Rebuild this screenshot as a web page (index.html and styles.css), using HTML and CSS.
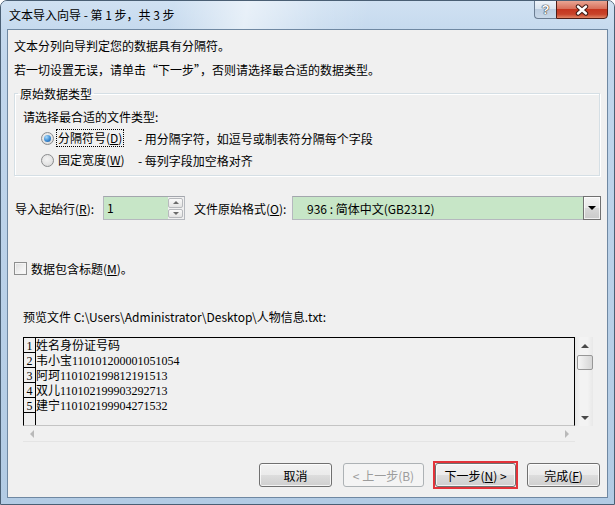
FILE: index.html
```html
<!DOCTYPE html>
<html lang="zh-CN">
<head>
<meta charset="utf-8">
<title>文本导入向导</title>
<link rel="stylesheet" href="styles.css">
</head>
<body>
<div class="window">
  <div class="titlebar">
    <span class="title">文本导入向导 - 第 1 步，共 3 步</span>
    <div class="caption">
      <div class="cap-help">?</div>
      <div class="cap-close">
        <svg width="16" height="12" viewBox="0 0 16 12">
          <path d="M4 2.5 L12 9.5 M12 2.5 L4 9.5" stroke="#3f1c16" stroke-width="4.4" stroke-linecap="round"/>
          <path d="M4 2.5 L12 9.5 M12 2.5 L4 9.5" stroke="#ffffff" stroke-width="2.4" stroke-linecap="round"/>
        </svg>
      </div>
    </div>
  </div>
  <div class="client">
    <p class="line">文本分列向导判定您的数据具有分隔符。</p>
    <p class="line">若一切设置无误，请单击“下一步”，否则请选择最合适的数据类型。</p>
    <fieldset class="group">
      <legend>原始数据类型</legend>
      <div class="g-row">请选择最合适的文件类型:</div>
      <div class="g-row">
        <span class="radio checked"></span>
        <span class="rlabel focus">分隔符号(<u>D</u>)</span>
        <span class="desc">- 用分隔字符，如逗号或制表符分隔每个字段</span>
      </div>
      <div class="g-row">
        <span class="radio"></span>
        <span class="rlabel">固定宽度(<u>W</u>)</span>
        <span class="desc">- 每列字段加空格对齐</span>
      </div>
    </fieldset>

    <div class="import-row">
      <span class="lbl-start">导入起始行(<u>R</u>):</span>
      <div class="spin">
        <span class="spin-field">1</span>
        <span class="spin-btns">
          <span class="spin-btn"><span class="tri-up small"></span></span>
          <span class="spin-btn"><span class="tri-down small"></span></span>
        </span>
      </div>
      <span class="lbl-origin">文件原始格式(<u>O</u>):</span>
      <div class="combo">
        <span class="combo-text">936 : 简体中文(GB2312)</span>
        <span class="combo-btn"><span class="tri-down"></span></span>
      </div>
    </div>

    <div class="check-row">
      <span class="checkbox"></span>
      <span>数据包含标题(<u>M</u>)。</span>
    </div>

    <div class="preview-label">预览文件 C:\Users\Administrator\Desktop\人物信息.txt:</div>

    <div class="preview">
      <div class="pv-main">
        <div class="pv-text">
          <div class="pv-nums">
            <div class="pv-num">1</div>
            <div class="pv-num">2</div>
            <div class="pv-num">3</div>
            <div class="pv-num">4</div>
            <div class="pv-num">5</div>
          </div>
          <div class="pv-lines">
            <div class="pv-line">姓名身份证号码</div>
            <div class="pv-line">韦小宝110101200001051054</div>
            <div class="pv-line">阿珂110102199812191513</div>
            <div class="pv-line">双儿110102199903292713</div>
            <div class="pv-line">建宁110102199904271532</div>
          </div>
        </div>
        <div class="vscroll">
          <span class="sb-btn"><span class="tri-up dark"></span></span>
          <span class="thumb"></span>
          <span class="sb-fill"></span>
          <span class="sb-btn"><span class="tri-down dark"></span></span>
        </div>
      </div>
      <div class="hscroll">
        <span class="sb-hbtn"><span class="tri-left"></span></span>
        <span class="sb-fill"></span>
        <span class="sb-hbtn"><span class="tri-right"></span></span>
      </div>
    </div>

    <div class="buttons">
      <span class="btn">取消</span>
      <span class="btn wide disabled">&lt; 上一步(B)</span>
      <span class="mark"><span class="btn wide">下一步(<u>N</u>) &gt;</span></span>
      <span class="btn">完成(<u>F</u>)</span>
    </div>
  </div>
</div>
</body>
</html>
```

FILE: styles.css
```css
* { box-sizing: border-box; }
html, body { margin: 0; padding: 0; background: #ffffff; }
body {
  font-family: "Noto Sans CJK SC", "Microsoft YaHei", sans-serif;
  font-size: 12px;
  color: #000;
}
u { text-decoration: underline; text-underline-offset: 1px; }

.window {
  width: 615px;
  height: 505px;
  border: 1px solid #4a5f74;
  border-radius: 7px 7px 0 0;
  padding: 0 6px 6px;
  background: linear-gradient(to bottom, #c9dcef 0, #c1d6ec 60px, #b2cbe4 100%);
  display: flex;
  flex-direction: column;
  overflow: hidden;
}

.titlebar {
  height: 28px;
  flex: none;
  display: flex;
  justify-content: space-between;
  align-items: flex-start;
  padding-left: 2px;
  margin: 0 -6px;
  padding-right: 6px;
  padding-left: 8px;
  background:
    linear-gradient(100deg, rgba(255,255,255,0) 28%, rgba(255,255,255,0.55) 40%, rgba(255,255,255,0.15) 52%, rgba(255,255,255,0) 60%),
    linear-gradient(to bottom, #d0e1f2, #c6daee);
}
.title { line-height: 28px; white-space: nowrap; }

.caption { display: flex; margin-top: -1px; }
.cap-help {
  width: 22px;
  height: 19px;
  border: 1px solid #6b7d92;
  border-right: none;
  border-radius: 0 0 0 4px;
  background: linear-gradient(to bottom, #eef3f9 0%, #d9e4ef 45%, #bccde0 50%, #c9d8e8 100%);
  color: #fff;
  font-family: "Liberation Sans", sans-serif;
  font-weight: bold;
  font-size: 13px;
  line-height: 17px;
  text-align: center;
  text-shadow: 0 0 1px #333, 0 0 1px #333, 0 0 1px #333;
}
.cap-close {
  width: 52px;
  height: 19px;
  border: 1px solid #4d1c15;
  border-radius: 0 0 4px 0;
  background: linear-gradient(to bottom, #e9a593 0%, #d8705b 45%, #c5361f 50%, #c8432a 78%, #e08565 100%);
  display: flex;
  align-items: center;
  justify-content: center;
}
.cap-close svg { display: block; }

.client {
  height: 469px;
  flex: none;
  border: 1px solid #6f88a2;
  background: #f0f0f0;
  display: flex;
  flex-direction: column;
  padding-top: 4px;
}

.line {
  margin: 0;
  height: 24px;
  line-height: 24px;
  padding-left: 6px;
  white-space: nowrap;
}

.group {
  margin: 4px 7px 0 6px;
  padding: 0 0 4px 0;
  border: 1px solid #d5dfe5;
  box-shadow: inset 1px 1px 0 #fff, 1px 1px 0 #fff;
  min-width: 0;
}
.group legend {
  margin-left: 3px;
  padding: 0 2px;
  line-height: 15px;
  height: 15px;
}
.g-row {
  height: 22px;
  display: flex;
  align-items: center;
  padding-left: 8px;
  white-space: nowrap;
}
.g-row:first-of-type { margin-top: 4px; }

.radio {
  width: 13px;
  height: 13px;
  border-radius: 50%;
  border: 1px solid #8a8c8e;
  background: radial-gradient(circle at 45% 40%, #f4f4f4 0%, #e4e4e4 55%, #cfcfcf 100%);
  margin-left: 18px;
  flex: none;
  position: relative;
}
.radio.checked::after {
  content: "";
  position: absolute;
  left: 2px;
  top: 2px;
  width: 7px;
  height: 7px;
  border-radius: 50%;
  background: radial-gradient(circle at 35% 30%, #a9dbfb 0%, #3b8ad2 55%, #1d5595 100%);
}
.rlabel {
  width: 68px;
  height: 18px;
  line-height: 16px;
  margin-left: 2px;
  padding-left: 1px;
  border: 1px dotted transparent;
}
.rlabel.focus { border-color: #000; }
.desc { margin-left: 14px; }

.import-row {
  margin-top: 20px;
  height: 24px;
  display: flex;
  align-items: center;
  padding-left: 7px;
  margin-right: 6px;
  white-space: nowrap;
}
.lbl-start { width: 88px; flex: none; }
.lbl-origin { width: 98px; flex: none; margin-left: 9px; }

.spin {
  width: 82px;
  height: 24px;
  flex: none;
  border: 1px solid #b5b8be;
  border-top-color: #a3a6ad;
  background: #c7e6c7;
  display: flex;
}
.spin-field { flex: 1; padding-left: 3px; line-height: 21px; }
.spin-btns {
  width: 16px;
  display: flex;
  flex-direction: column;
  gap: 1px;
  padding: 1px 1px 1px 0;
  background: #f0f0f0;
}
.spin-btn {
  flex: 1;
  border: 1px solid #b7b9bd;
  border-radius: 2px;
  background: linear-gradient(to bottom, #fafafa, #e3e3e3);
  display: flex;
  align-items: center;
  justify-content: center;
}

.combo {
  flex: 1;
  height: 24px;
  border: 1px solid #b5b8be;
  border-top-color: #a3a6ad;
  background: #c7e6c7;
  display: flex;
  align-items: center;
}
.combo-text { flex: 1; padding-left: 14px; }
.combo-btn {
  width: 18px;
  height: 24px;
  margin: -1px -1px -1px 0;
  border: 1px solid #707070;
  background: linear-gradient(to bottom, #f3f3f3 0%, #e8e8e8 50%, #d8d8d8 51%, #cacaca 100%);
  box-shadow: inset 0 0 0 1px rgba(255,255,255,0.7);
  display: flex;
  align-items: center;
  justify-content: center;
}

.tri-up, .tri-down, .tri-left, .tri-right { width: 0; height: 0; display: block; }
.tri-down { border-left: 4px solid transparent; border-right: 4px solid transparent; border-top: 4px solid #000; }
.tri-up.small { border-left: 3px solid transparent; border-right: 3px solid transparent; border-bottom: 3px solid #6a6a6a; }
.tri-down.small { border-left: 3px solid transparent; border-right: 3px solid transparent; border-top: 3px solid #6a6a6a; }
.tri-up.dark { border-left: 4px solid transparent; border-right: 4px solid transparent; border-bottom: 4px solid #4a4a4a; }
.tri-down.dark { border-left: 4px solid transparent; border-right: 4px solid transparent; border-top: 4px solid #4a4a4a; }
.tri-left { border-top: 4px solid transparent; border-bottom: 4px solid transparent; border-right: 4px solid #b9b9b9; }
.tri-right { border-top: 4px solid transparent; border-bottom: 4px solid transparent; border-left: 4px solid #b9b9b9; }

.check-row {
  margin-top: 37px;
  height: 22px;
  display: flex;
  align-items: center;
  padding-left: 6px;
}
.checkbox {
  width: 13px;
  height: 13px;
  flex: none;
  border: 1px solid #8e8f8f;
  background: linear-gradient(135deg, #dcdcdc 0%, #f2f2f2 60%, #fbfbfb 100%);
  box-shadow: inset 0 0 0 1px #f4f4f4;
  margin-right: 4px;
}

.preview-label {
  margin-top: 27px;
  height: 22px;
  line-height: 22px;
  padding-left: 15px;
  white-space: nowrap;
}

.preview {
  margin: 9px 0 0 15px;
  width: 570px;
}
.pv-main { display: flex; height: 89px; }
.pv-text {
  width: 552px;
  border: 1px solid #000;
  border-bottom-color: #c4c4c4;
  display: flex;
  overflow: hidden;
}
.pv-nums {
  width: 12px;
  border-right: 1px solid #000;
  flex: none;
}
.pv-num, .pv-line {
  height: 15px;
  line-height: 17px;
  overflow: hidden;
  font-family: "Liberation Serif", "Noto Sans CJK SC", serif;
  font-size: 12px;
  white-space: nowrap;
}
.pv-num {
  border-bottom: 1px solid #000;
  text-align: center;
}
.pv-lines { flex: 1; }

.vscroll {
  width: 18px;
  display: flex;
  flex-direction: column;
  align-items: center;
  background: linear-gradient(to right, #e8e8e8, #f3f3f3 30%, #f3f3f3 70%, #e8e8e8);
  padding-left: 1px;
}
.sb-btn {
  height: 17px;
  width: 16px;
  display: flex;
  align-items: center;
  justify-content: center;
  flex: none;
}
.thumb {
  width: 16px;
  height: 15px;
  margin-top: 1px;
  border: 1px solid #979797;
  border-radius: 2px;
  background: linear-gradient(to right, #f6f6f6, #e4e4e4 55%, #d6d6d6);
  flex: none;
}
.sb-fill { flex: 1; }

.hscroll {
  width: 552px;
  height: 16px;
  display: flex;
  align-items: center;
  background: #f0f0f0;
  border-bottom: 1px solid #e4e4e4;
}
.sb-hbtn {
  width: 17px;
  height: 16px;
  display: flex;
  align-items: center;
  justify-content: center;
  flex: none;
}

.buttons {
  margin-top: auto;
  margin-bottom: 10px;
  margin-right: 7px;
  display: flex;
  justify-content: flex-end;
  align-items: center;
  gap: 11px;
}
.btn {
  width: 73px;
  height: 24px;
  border: 1px solid #707070;
  border-radius: 3px;
  background: linear-gradient(to bottom, #f2f2f2 0%, #ebebeb 50%, #dddddd 51%, #cfcfcf 100%);
  box-shadow: inset 0 0 0 1px rgba(255,255,255,0.75);
  display: flex;
  align-items: center;
  justify-content: center;
  white-space: nowrap;
}
.btn.wide { width: 81px; }
.btn.disabled {
  border-color: #adb2b5;
  background: #f4f4f4;
  color: #9c9c9c;
  box-shadow: none;
}
.mark {
  display: block;
  border: 2px solid #e3333a;
  margin: -2px;
}
```
